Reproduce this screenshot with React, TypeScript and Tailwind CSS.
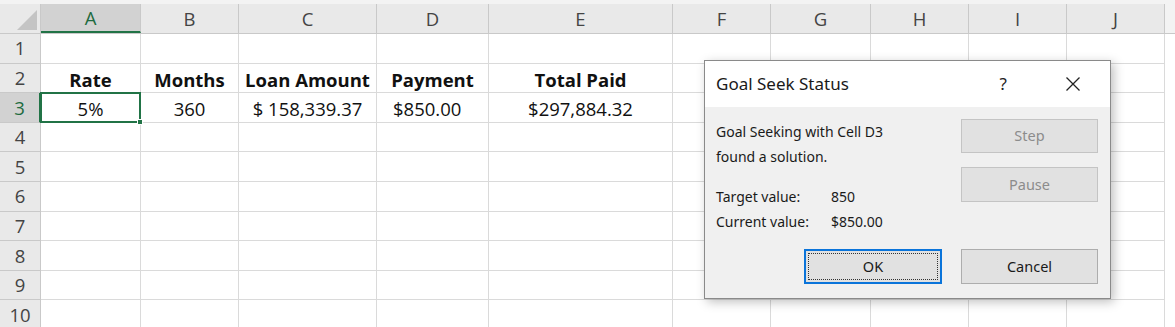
import React from "react";

const cols = [
  { l: "A", w: 100 },
  { l: "B", w: 98 },
  { l: "C", w: 138 },
  { l: "D", w: 112 },
  { l: "E", w: 184 },
  { l: "F", w: 98 },
  { l: "G", w: 100 },
  { l: "H", w: 98 },
  { l: "I", w: 98 },
  { l: "J", w: 98 },
];

const data: Record<number, (string | null)[]> = {
  2: ["Rate", "Months", "Loan Amount", "Payment", "Total Paid"],
  3: ["5%", "360", "$ 158,339.37", "$850.00", "$297,884.32"],
};

const align: Record<number, string[]> = {
  3: ["justify-center", "justify-center", "justify-center", "justify-start pl-[16px]", "justify-center"],
};

export default function App() {
  const rows = [1, 2, 3, 4, 5, 6, 7, 8, 9, 10];
  return (
    <div
      className="relative w-[1175px] h-[327px] overflow-hidden bg-white"
      style={{ fontFamily: '"Open Sans", "Noto Sans", sans-serif' }}
    >
      <div className="h-[4px] bg-[#f3f3f3]" />
      {/* header row */}
      <div className="flex h-[30px] bg-[#e9e9e9] border-b border-[#c9c9c9]">
        <div className="w-[41px] shrink-0 relative border-r border-[#c9c9c9] bg-[#e9e9e9]">
          <svg className="absolute right-[3px] bottom-[3px]" width="20" height="20" viewBox="0 0 20 20">
            <polygon points="20,0 20,20 0,20" fill="#c4c4c4" />
          </svg>
        </div>
        {cols.map((c) => (
          <div
            key={c.l}
            style={{ width: c.w }}
            className={
              "shrink-0 flex items-center justify-center border-r border-[#c9c9c9] text-[18.5px] " +
              (c.l === "A"
                ? "bg-[#d2d2d2] text-[#1e6b40] border-b-2 border-b-[#217346] pt-[1px]"
                : "text-[#444]")
            }
          >
            {c.l}
          </div>
        ))}
        <div className="flex-1 bg-[#f3f3f3]" />
      </div>
      {rows.map((r) => (
        <div key={r} className="flex h-[29.6px]">
          <div
            className={
              "w-[41px] shrink-0 flex items-center justify-center border-r border-b text-[18.5px] " +
              (r === 3
                ? "bg-[#d2d2d2] text-[#1e6b40] border-[#c9c9c9] border-r-2 border-r-[#217346]"
                : "bg-[#e9e9e9] text-[#444] border-[#c9c9c9]")
            }
          >
            {r}
          </div>
          {cols.map((c, i) => {
            const v = data[r]?.[i] ?? null;
            const al = align[r]?.[i] ?? "justify-center";
            return (
              <div
                key={c.l}
                style={{ width: c.w }}
                className={
                  "shrink-0 flex items-center pt-[3px] border-r border-b border-[#dadada] text-[18.5px] text-[#111] whitespace-nowrap " +
                  al +
                  (r === 2 ? " font-bold" : "")
                }
              >
                {v}
              </div>
            );
          })}
          <div className="flex-1 bg-white" />
        </div>
      ))}

      {/* selected cell A3 */}
      <div className="absolute left-[40px] top-[92px] w-[101px] h-[31px] border-2 border-[#217346] pointer-events-none" />
      <div className="absolute left-[137px] top-[119px] w-[6px] h-[6px] bg-[#217346] border border-white" />

      {/* dialog */}
      <div
        className="absolute left-[704px] top-[60px] w-[407px] h-[239px] border border-[#8a8a8a] bg-[#f0f0f0] shadow-[3px_3px_10px_rgba(0,0,0,0.25)] flex flex-col"
        style={{ fontFamily: '"Noto Sans", "Open Sans", sans-serif' }}
      >
        <div className="h-[46px] shrink-0 bg-white flex items-center pl-[11px] pr-[29px]">
          <span className="text-[17px] text-[#1a1a1a] flex-1">Goal Seek Status</span>
          <span className="text-[17px] text-[#222] mr-[58px]">?</span>
          <svg width="16" height="16" viewBox="0 0 16 16">
            <path d="M1.5 1.5 L14.5 14.5 M14.5 1.5 L1.5 14.5" stroke="#222" strokeWidth="1.3" />
          </svg>
        </div>
        <div className="flex flex-col pl-[11px] pr-[12px] pt-[12px]">
          <div className="flex">
            <div className="flex-1 flex flex-col text-[14px] text-[#1a1a1a]">
              <div className="leading-[25px]">Goal Seeking with Cell D3</div>
              <div className="leading-[25px]">found a solution.</div>
              <div className="flex leading-[25px] mt-[14.5px]">
                <span className="w-[115px]">Target value:</span>
                <span>850</span>
              </div>
              <div className="flex leading-[25px]">
                <span className="w-[115px]">Current value:</span>
                <span>$850.00</span>
              </div>
            </div>
            <div className="w-[137px] flex flex-col">
              <div className="h-[34px] border border-[#c4c4c4] bg-[#e1e1e1] flex items-center justify-center text-[14.5px] text-[#8c8c8c]">
                Step
              </div>
              <div className="h-[35px] mt-[14px] border border-[#c4c4c4] bg-[#e1e1e1] flex items-center justify-center text-[14.5px] text-[#8c8c8c]">
                Pause
              </div>
            </div>
          </div>
          <div className="flex justify-end gap-[19px] mt-[15.5px]">
            <div className="w-[138px] h-[35px] border-2 border-[#0a74da] bg-[#e1e1e1] p-[2px]">
              <div className="w-full h-full border border-dotted border-[#333] flex items-center justify-center text-[14.5px] text-[#1a1a1a]">
                OK
              </div>
            </div>
            <div className="w-[137px] h-[35px] border border-[#adadad] bg-[#e1e1e1] flex items-center justify-center text-[14.5px] text-[#1a1a1a]">
              Cancel
            </div>
          </div>
        </div>
      </div>
    </div>
  );
}
